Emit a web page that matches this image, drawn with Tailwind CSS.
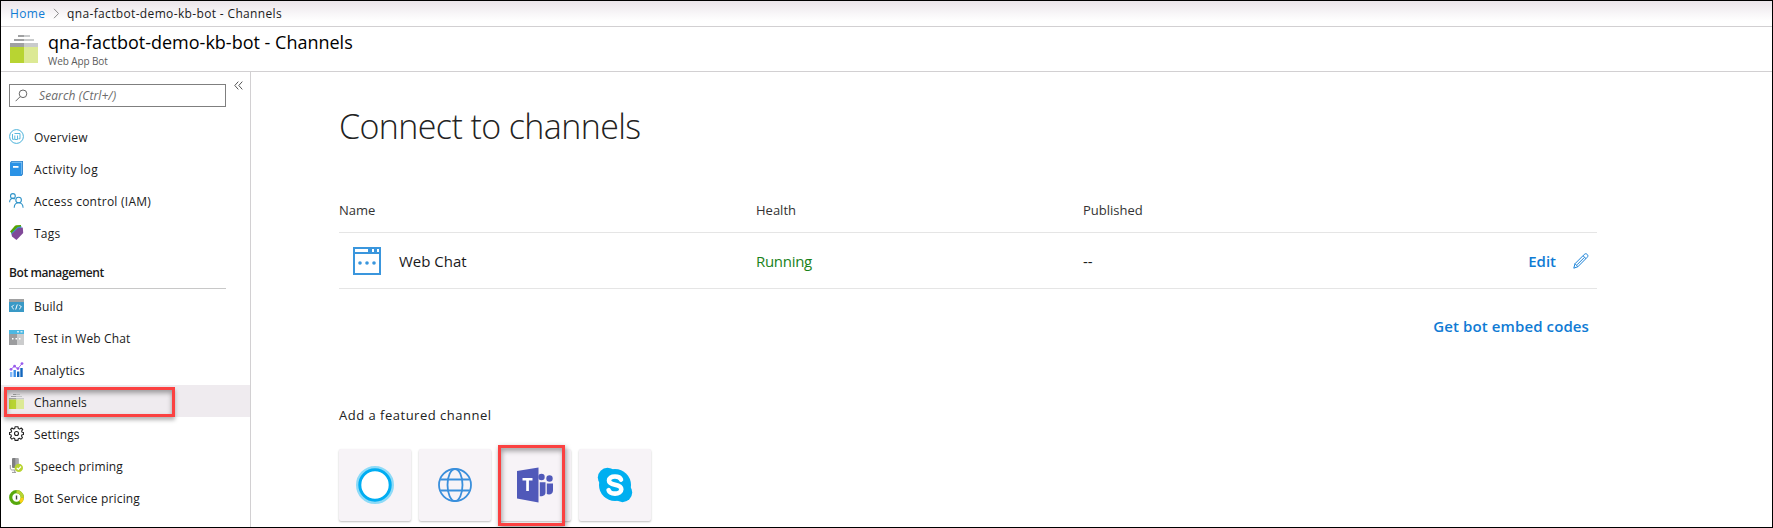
<!DOCTYPE html>
<html lang="en">
<head>
<meta charset="utf-8">
<title>qna-factbot-demo-kb-bot - Channels</title>
<script src="https://cdn.jsdelivr.net/npm/@tailwindcss/browser@4"></script>
</head>
<body class="bg-white font-['Open_Sans','Noto_Sans',sans-serif] text-[#1a1a1a]">
<div class="flex h-[528px] w-[1773px] flex-col overflow-hidden border border-black">

  <!-- Breadcrumb -->
  <nav class="flex h-[26px] shrink-0 items-center border-b border-[#d2d0d2] bg-linear-to-b from-[#ebe5ea] via-[#f8f6f8] via-50% to-white to-80% pl-[9px] text-[12px] whitespace-nowrap">
    <a class="w-[35px] tracking-[0.35px] text-[#0f7bd4]">Home</a>
    <svg class="ml-[8px] h-[11px] w-[7px]" viewBox="0 0 7 11" fill="none" stroke="#8a8a8a"><path d="M1 .8 5.5 5.5 1 10.2"/></svg>
    <span class="ml-[7px] tracking-[0.35px]">qna-factbot-demo-kb-bot - Channels</span>
  </nav>

  <!-- Title -->
  <header class="flex h-[45px] shrink-0 border-b border-[#d2d0d2] pl-[9px]">
    <svg class="mt-[8px] h-[28px] w-[28px]" viewBox="0 0 28 28" shape-rendering="crispEdges">
      <path fill="#a0a1a2" d="M8 0h6v2H8zM4 4h10v2H4zM0 8h14v4H0z"/><path fill="#c9cbcc" d="M14 0h6v2h-6zM14 4h10v2H14zM14 8h14v4H14z"/>
      <path fill="#b8d432" d="M0 12h14v16H0z"/><path fill="#dce995" d="M14 12h14v16H14z"/>
    </svg>
    <div class="ml-[10px] flex flex-col whitespace-nowrap">
      <h1 class="mt-[3px] text-[18px] leading-[24px] text-black">qna-factbot-demo-kb-bot - Channels</h1>
      <p class="mt-[2px] text-[10px] leading-[10px] tracking-[-0.1px] text-[#5c5c5c]">Web App Bot</p>
    </div>
  </header>

  <div class="flex min-h-0 flex-1">
    <!-- Sidebar -->
    <aside class="flex w-[250px] shrink-0 flex-col border-r border-[#d2d0d2] text-[12px]">
      <div class="flex pt-[12px] pl-[8px]">
        <div class="flex h-[23px] w-[217px] items-center border border-[#7f7f7f]">
          <svg class="ml-[5px] h-[13px] w-[13px]" viewBox="0 0 13 13" fill="none" stroke="#666"><circle cx="8" cy="4.8" r="3.8"/><path d="M5.2 7.6.6 12.2"/></svg>
          <span class="ml-[11px] tracking-[0.1px] text-[#6b6b6b] italic">Search (Ctrl+/)</span>
        </div>
        <svg class="-mt-[3px] ml-[8px] h-[9px] w-[9px]" viewBox="0 0 9 9" fill="none" stroke="#555"><path d="M4.3.6.8 4.5l3.5 3.9M8.300.6 4.800 4.500l3.500 3.900"/></svg>
      </div>
      <ul class="mt-[13px] tracking-[0.2px]">
        <li class="flex h-8 items-center gap-[10px] pl-[8px]">
          <svg class="mt-px h-[15px] w-[15px]" viewBox="0 0 15 15" fill="none" stroke="#4bb2da"><circle cx="7.5" cy="7.5" r="6.9"/><path stroke-width=".9" d="M5.500 10.300H3.500V5M5.500 4.500h5.500v5.300H9.500M5.800 6.500v4h2.700v-4"/></svg>
          <span class="pt-[3px]">Overview</span></li>
        <li class="flex h-8 items-center gap-[10px] pl-[8px]">
          <svg class="mt-px h-[15px] w-[15px]" viewBox="0 0 15 15"><path fill="#2a7fc8" d="M2.500 0H14v13.200L12.500 15h-11L1 14.300V1.500z"/><path fill="#8cc8f5" d="M2.500.7h10.700v12.500H2.500z"/><path fill="#2b93e6" d="M1 1.700h11.300V15H2l-1-1z"/><path fill="#fff" d="M4 5h5.500v1.800H4z"/></svg>
          <span class="pt-[3px] tracking-[0.35px]">Activity log</span></li>
        <li class="flex h-8 items-center gap-[10px] pl-[8px]">
          <svg class="mt-px h-[15px] w-[15px]" viewBox="0 0 15 15" fill="none" stroke="#2f93c8" stroke-width="1.1"><circle cx="3.9" cy="3" r="2.4"/><path d="M.6 9.2c0-2.400 1.400-3.800 3.300-3.800.8 0 1.400.2 1.900.6"/><circle cx="9.600" cy="7" r="2.800"/><path d="M5.200 14.800c.1-3.200 1.900-5 4.400-5s4.300 1.800 4.500 5"/></svg>
          <span class="pt-[3px] tracking-[0.25px]">Access control (IAM)</span></li>
        <li class="flex h-8 items-center gap-[10px] pl-[8px]">
          <svg class="mt-px h-[15px] w-[15px]" viewBox="0 0 15 15"><path fill="#57a300" d="M1 6.500 6 .8Q6.500.2 7.300.2L12 0v4L5 11z"/><path fill="#3999c6" d="M2 8.500 8.500 2l4-.8V5L5 12z"/><path fill="#804998" d="M2.500 9.200 8.800 3.300l5-.8.4 5.500L7.500 15 3 11.500z"/></svg>
          <span class="pt-[3px]">Tags</span></li>
      </ul>
      <h2 class="mt-[17px] ml-[8px] h-[23px] w-[217px] shrink-0 text-[12px] leading-[16px] font-semibold tracking-[-0.4px] text-[#1a1a1a]">Bot management</h2>
      <div class="ml-[8px] h-px w-[217px] shrink-0 bg-[#c8c8c8]"></div>
      <ul class="tracking-[0.15px]">
        <li class="flex h-8 items-center gap-[10px] pl-[8px]">
          <svg class="mt-px h-[15px] w-[15px]" viewBox="0 0 15 15"><path fill="#a0a1a2" d="M0 1h15v3H0z"/><path fill="#3999c6" d="M0 4h15v10H0z"/><path fill="none" stroke="#fff" d="M4.800 6.800 2.600 9l2.200 2.200M10.200 6.800 12.400 9l-2.200 2.200M8.300 6.500 6.700 11.500"/></svg>
          <span class="pt-[3px]">Build</span></li>
        <li class="flex h-8 items-center gap-[10px] pl-[8px]">
          <svg class="mt-px h-[15px] w-[15px]" viewBox="0 0 15 15"><path fill="#4db8e2" d="M0 0h15v4H0z"/><path fill="#fff" opacity=".75" d="M8 1h2v1.500H8zM11.500 1h2v1.500h-2z"/><path fill="#9b9c9e" d="M0 4h8v11H0z"/><path fill="#cbcccd" d="M8 4h7v11H8z"/><path fill="#fff" d="M3 8h1.500v1.500H3zM6.500 8H8v1.500H6.500zM10 8h1.500v1.500H10z"/></svg>
          <span class="pt-[3px]">Test in Web Chat</span></li>
        <li class="flex h-8 items-center gap-[10px] pl-[8px]">
          <svg class="mt-px h-[15px] w-[15px]" viewBox="0 0 15 15"><path fill="#83b9f9" d="M1 10h2.400v5H1z"/><path fill="#3a8ee8" d="M4.500 8h2.400v7H4.500z"/><path fill="#1266bd" d="M8 9.500h2.400V15H8zM11.300 6h2.400v9h-2.400z"/><path fill="none" stroke="#a067ef" d="m2 7.200 3.600-3L8.800 6.800 13 1.600"/><g fill="#9a5cec"><circle cx="2" cy="7.300" r="1.400"/><circle cx="5.600" cy="4.200" r="1.400"/><circle cx="8.900" cy="6.600" r="1.400"/><circle cx="13" cy="1.600" r="1.400"/></g></svg>
          <span class="pt-[3px]">Analytics</span></li>
        <li class="relative flex h-8 items-center gap-[10px] bg-[#efebef] pl-[8px]">
          <svg class="mt-px h-[15px] w-[15px]" viewBox="0 0 15 15"><path fill="#a0a1a2" d="M4 0h3.500v1H4zM2 2h5.500v1H2zM0 4h7.500v1.500H0z"/><path fill="#c9cbcc" d="M7.500 0H11v1H7.500zM7.500 2H13v1H7.500zM7.500 4H15v1.500H7.500z"/><path fill="#b8d432" d="M0 5.500h7.500V15H0z"/><path fill="#dce995" d="M7.500 5.500H15V15H7.500z"/></svg>
          <span class="pt-[3px]">Channels</span>
          <div class="absolute top-[2px] left-[3px] h-[30px] w-[171px] border-3 border-[#fb4141] shadow-[0_3px_4px_rgba(0,0,0,.3),inset_0_3px_5px_rgba(0,0,0,.35)]"></div></li>
        <li class="flex h-8 items-center gap-[10px] pl-[8px]">
          <svg class="mt-px h-[15px] w-[15px]" viewBox="0 0 15 15" fill="none" stroke="#222" stroke-width="1.100" stroke-linejoin="round"><path d="m6 .7h3l.3 1.900 1.300.500 1.600-1.100 1.500 1.500-1.100 1.600.500 1.200 1.400.2v2l-1.500.3-.500 1.200 1 1.700-1.500 1.500-1.500-1-1.200.500-.3 1.700H6l-.3-1.800-1.200-.500-1.600 1-1.500-1.500 1-1.500L2 8.800.5 8.500v-2L2.100 6.200l.5-1.200-1-1.500L3 2l1.600 1 1.200-.5z"/><circle cx="7.500" cy="7.500" r="2"/></svg>
          <span class="pt-[3px]">Settings</span></li>
        <li class="flex h-8 items-center gap-[10px] pl-[8px]">
          <svg class="mt-px h-[15px] w-[15px]" viewBox="0 0 15 15"><rect x="3" y="0" width="6.500" height="10" rx="1" fill="#7e7f81"/><path fill="#a8a9ab" d="M6.300 0h2.200c.6 0 1 .4 1 1v9H6.300z"/><path fill="none" stroke="#999" d="M1.300 7v3c0 1.300.8 2 2 2H6M5.800 12v2.500M3 14.400h4"/><circle cx="9.800" cy="9.900" r="4.200" fill="#b8d432"/><path fill="none" stroke="#fff" stroke-width="1.200" d="m7.800 9.900 1.500 1.500 2.700-2.900"/></svg>
          <span class="pt-[3px]">Speech priming</span></li>
        <li class="flex h-8 items-center gap-[10px] pl-[8px]">
          <svg class="mt-px h-[15px] w-[15px]" viewBox="0 0 15 15"><circle cx="7.500" cy="7.500" r="5.800" fill="none" stroke="#57a80c" stroke-width="3.200"/><path fill="none" stroke="#b8d432" stroke-width="3.200" d="M7.500 1.700a5.800 5.800 0 0 1 5.800 5.800"/><path fill="none" stroke="#fcd116" stroke-width="3.200" d="M13.300 7.500a5.800 5.800 0 0 1-2.300 4.600"/><path fill="#444" d="M6.800 5.500h1.400v4H6.800z"/></svg>
          <span class="pt-[3px]">Bot Service pricing</span></li>
      </ul>
    </aside>

    <!-- Content -->
    <main class="flex w-[1346px] flex-col pl-[88px] whitespace-nowrap">
      <h2 class="mt-[30px] h-[48px] text-[34px] leading-[48px] font-light tracking-[-0.6px] text-[#222]">Connect to channels</h2>
      <div class="mt-[49px] flex h-[34px] border-b border-[#e5e5e5] text-[13px] leading-[22px] font-medium text-[#333]">
        <span class="w-[417px]">Name</span><span class="w-[327px]">Health</span><span>Published</span>
      </div>
      <div class="flex h-[56px] items-center border-b border-[#e5e5e5] pt-px text-[15px]">
        <svg class="ml-[14px] h-[28px] w-[28px]" viewBox="0 0 28 28"><path fill="#3a96dd" fill-rule="evenodd" d="M0 0h28v28H0zM2 2v3h13V2zM19 2v3h2V2zM24 2v3h2V2zM2 7v19h24V7z"/><g fill="#3a96dd"><circle cx="7" cy="16" r="1.800"/><circle cx="14" cy="16" r="1.800"/><circle cx="21" cy="16" r="1.800"/></g></svg>
        <span class="ml-[18px] w-[357px]">Web Chat</span>
        <span class="w-[327px] tracking-[-0.3px] text-[#1a821a]">Running</span>
        <span>--</span>
        <a class="mr-[17px] ml-auto text-[15px] font-semibold text-[#0f7bd4]">Edit</a>
        <svg class="mr-[8px] h-[16px] w-[16px]" viewBox="0 0 16 16" fill="none" stroke="#1a82d8" stroke-linejoin="round"><path d="M.8 15.200 2 10.700 11.300 1.400c.9-.9 2-.9 2.900 0s.9 2 0 2.900L4.900 13.700zM2 10.700l2.900 3M10 2.700l3 2.900M4 11.800l7.300-7.300"/></svg>
      </div>
      <a class="mt-[25px] mr-[8px] self-end text-[15px] leading-[24px] font-semibold tracking-[0.1px] text-[#0f7bd4]">Get bot embed codes</a>
      <h3 class="mt-[66px] text-[13px] leading-[22px] font-medium tracking-[0.5px] text-[#222]">Add a featured channel</h3>
      <div class="mt-[23px] flex gap-[8px]">
        <div class="flex h-[72px] w-[72px] shrink-0 items-center justify-center rounded-[2px] bg-[#f7f3f7] shadow-[0_1px_2px_rgba(0,0,0,.25)]">
          <svg class="h-[38px] w-[38px]" viewBox="0 0 38 38" fill="none"><circle cx="19" cy="19" r="17.500" stroke="#8ddaf7" stroke-width="3"/><circle cx="19" cy="19" r="15.200" fill="#fff" stroke="#00adf2" stroke-width="3"/></svg>
        </div>
        <div class="flex h-[72px] w-[72px] shrink-0 items-center justify-center rounded-[2px] bg-[#f7f3f7] shadow-[0_1px_2px_rgba(0,0,0,.25)]">
          <svg class="h-[34px] w-[34px]" viewBox="0 0 34 34" fill="none" stroke="#3a8fdc" stroke-width="1.800"><circle cx="17" cy="17" r="16"/><ellipse cx="17" cy="17" rx="7.500" ry="16"/><path d="M2.500 11.500h29M2.500 22.500h29"/></svg>
        </div>
        <div class="relative flex h-[72px] w-[72px] shrink-0 items-center justify-center rounded-[2px] bg-[#f7f3f7] shadow-[0_1px_2px_rgba(0,0,0,.25)]">
          <svg class="ml-[1px] h-[36px] w-[37px]" viewBox="0 0 37 36" fill="#5059b9"><path d="M0 4 21.500.5v35L0 31.500z"/><path fill="#fff" d="M5.500 11h10v2.500h-3.600V24H9.200V13.500H5.500z"/><circle cx="24.500" cy="10" r="3.200"/><circle cx="32.500" cy="11.500" r="3.200"/><path d="M22.800 15.300h5.700v10.200c0 2.200-1.500 3.900-5.700 3.700zM29.800 16.500H36v7c0 2.600-1.800 4-4 4-1 0-1.700-.2-2.200-.4z"/></svg>
          <div class="absolute -top-[4px] -left-px h-[81px] w-[67px] border-3 border-[#fb4141] shadow-[1px_2px_5px_rgba(0,0,0,.4),inset_1px_3px_5px_rgba(0,0,0,.35)]"></div>
        </div>
        <div class="flex h-[72px] w-[72px] shrink-0 items-center justify-center rounded-[2px] bg-[#f7f3f7] shadow-[0_1px_2px_rgba(0,0,0,.25)]">
          <svg class="h-[36px] w-[36px]" viewBox="0 0 36 36"><g fill="#00aff0"><circle cx="18" cy="18" r="16"/><circle cx="10.500" cy="10.500" r="9.700"/><circle cx="25.500" cy="25.500" r="9.700"/></g><path fill="none" stroke="#fff" stroke-width="4.600" stroke-linecap="round" d="M24 12.500c-.8-2-3-3-6-3-3.700 0-6 1.600-6 4 0 2.900 2.800 3.600 6 4.300 4 .8 6.300 1.700 6.300 4.500 0 2.700-2.500 4.300-6.300 4.300-3.500 0-5.700-1.200-6.400-3.500"/></svg>
        </div>
      </div>
    </main>
  </div>
</div>
</body>
</html>
